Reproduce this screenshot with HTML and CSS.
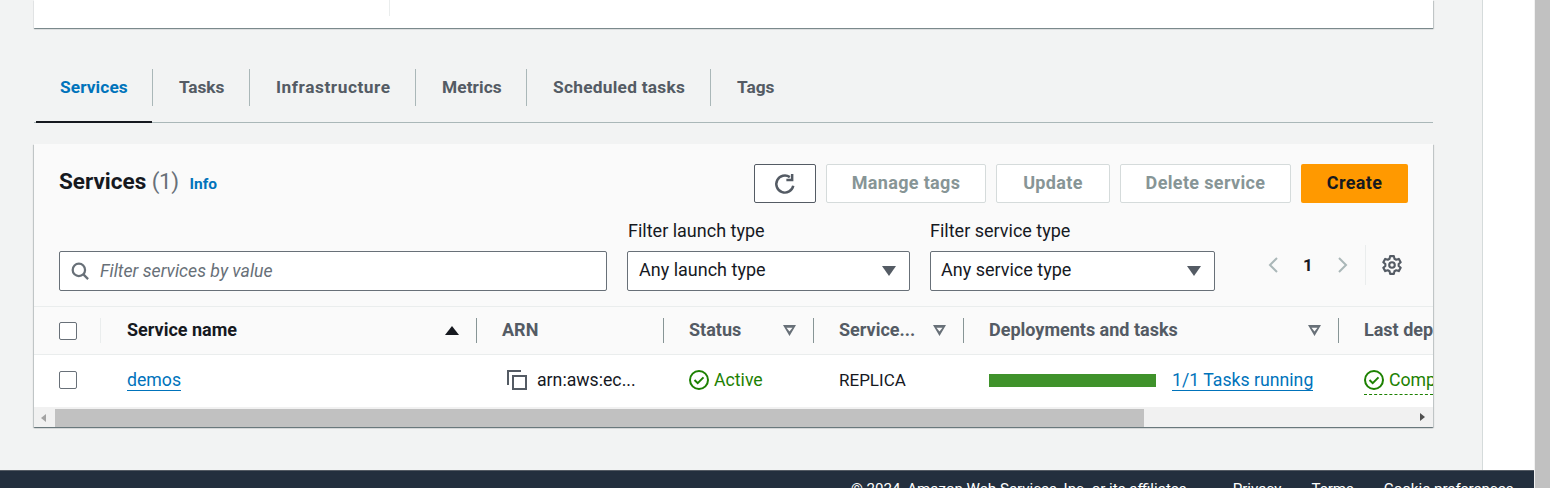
FILE: index.html
```html
<!DOCTYPE html>
<html lang="en">
<head>
<meta charset="utf-8">
<title>Services</title>
<link rel="stylesheet" href="styles.css">
</head>
<body>
<div class="page">
  <div class="viewport">
    <div class="upper">
      <main class="main">
        <div class="top-card"><div class="top-card-inner"><span class="top-divider"></span></div></div>
        <nav class="tabs">
          <a class="tab active">Services</a>
          <a class="tab t-tasks">Tasks</a>
          <a class="tab t-infra">Infrastructure</a>
          <a class="tab t-metrics">Metrics</a>
          <a class="tab t-sched">Scheduled tasks</a>
          <a class="tab t-tags">Tags</a>
        </nav>
        <section class="card">
          <header class="card-head">
            <div class="title-row">
              <h2 class="title">Services <span class="count">(1)</span></h2>
              <a class="info">Info</a>
              <div class="actions">
                <button class="btn btn-refresh" aria-label="Refresh">
                  <svg width="22" height="22" viewBox="0 0 16 16" fill="none" stroke="#545b64" stroke-width="1.800"><path d="M14 9.200A6.200 6.200 0 1 1 11.500 3"/><path d="M13.200 .8v4.300H9"/></svg>
                </button>
                <button class="btn btn-disabled btn-tags">Manage tags</button>
                <button class="btn btn-disabled btn-update">Update</button>
                <button class="btn btn-disabled btn-delete">Delete service</button>
                <button class="btn btn-primary">Create</button>
              </div>
            </div>
            <div class="filter-row">
              <div class="search">
                <svg class="search-icon" width="18" height="18" viewBox="0 0 16 16" fill="none" stroke="#687078" stroke-width="2"><circle cx="7" cy="7" r="5.500"/><path d="M11 11l4.200 4.200"/></svg>
                <span class="placeholder">Filter services by value</span>
              </div>
              <div class="field field-launch">
                <label class="field-label">Filter launch type</label>
                <div class="select"><span>Any launch type</span><i class="caret"></i></div>
              </div>
              <div class="field field-service">
                <label class="field-label">Filter service type</label>
                <div class="select"><span>Any service type</span><i class="caret"></i></div>
              </div>
              <div class="pager">
                <svg width="14" height="18" viewBox="0 0 14 18" fill="none" stroke="#aab7b8" stroke-width="2"><path d="M11 2L4 9l7 7"/></svg>
                <span class="page-num">1</span>
                <svg width="14" height="18" viewBox="0 0 14 18" fill="none" stroke="#aab7b8" stroke-width="2"><path d="M3 2l7 7-7 7"/></svg>
                <span class="pager-divider"></span>
                <svg class="gear" width="20" height="20" viewBox="1 1 18 18" fill="none" stroke="#545b64" stroke-width="1.900" stroke-linejoin="round"><path d="M8.300 2h3.400l.5 2.400 1.600.9 2.300-.8 1.700 3-1.800 1.600v1.800l1.800 1.600-1.700 3-2.300-.8-1.600.9-.5 2.400H8.300l-.5-2.400-1.600-.9-2.300.8-1.700-3 1.800-1.600V9.100L2.200 7.500l1.700-3 2.300.8 1.600-.9z"/><circle cx="10" cy="10" r="2.500"/></svg>
              </div>
            </div>
          </header>
          <div class="table-wrap">
            <div class="row row-head">
              <div class="cell c-check"><i class="checkbox"></i><span class="light-sep"></span></div>
              <div class="cell c-name strong">Service name<i class="sort-up"></i><span class="sep"></span></div>
              <div class="cell c-arn">ARN<span class="sep"></span></div>
              <div class="cell c-status">Status<i class="filter-ico"></i><span class="sep"></span></div>
              <div class="cell c-type">Service...<i class="filter-ico"></i><span class="sep"></span></div>
              <div class="cell c-deploy">Deployments and tasks<i class="filter-ico"></i><span class="sep"></span></div>
              <div class="cell c-last">Last deployment</div>
            </div>
            <div class="row row-body">
              <div class="cell c-check"><i class="checkbox"></i></div>
              <div class="cell c-name has-link"><a class="link">demos</a></div>
              <div class="cell c-arn arn">
                <svg width="22" height="22" viewBox="0 0 22 22" fill="none" stroke="#545b64" stroke-width="2"><path d="M2 16V2h13"/><rect x="7" y="7" width="13" height="13"/></svg>
                <span>arn:aws:ec...</span>
              </div>
              <div class="cell c-status ok">
                <svg width="20" height="20" viewBox="0 0 20 20" fill="none" stroke="#1d8102" stroke-width="2"><circle cx="10" cy="10" r="9"/><path d="M5.500 10l3.200 3.200 5.800-5.800"/></svg>
                <span>Active</span>
              </div>
              <div class="cell c-type plain">REPLICA</div>
              <div class="cell c-deploy has-link"><span class="bar"></span><a class="link">1/1 Tasks running</a></div>
              <div class="cell c-last ok last">
                <svg width="20" height="20" viewBox="0 0 20 20" fill="none" stroke="#1d8102" stroke-width="2"><circle cx="10" cy="10" r="9"/><path d="M5.500 10l3.200 3.200 5.800-5.800"/></svg>
                <span>Completed</span>
              </div>
            </div>
            <div class="hscroll">
              <i class="arrow-left"></i>
              <div class="hthumb"></div>
              <i class="arrow-right"></i>
            </div>
          </div>
        </section>
      </main>
      <aside class="side"></aside>
    </div>
    <footer class="footer">
      <span class="copyright">© 2024, Amazon Web Services, Inc. or its affiliates.</span>
      <a>Privacy</a><a>Terms</a><a>Cookie preferences</a>
    </footer>
  </div>
  <div class="vscroll"></div>
</div>
</body>
</html>
```
FILE: styles.css
```css
* { box-sizing: border-box; }
html, body { margin: 0; height: 100%; overflow: hidden; }
body { font-family: Roboto, "Noto Sans", sans-serif; font-size: 16px; color: #16191f; background: #fff; }
.page { display: flex; height: 488px; }
.viewport { width: 1534px; display: flex; flex-direction: column; }
.upper { display: flex; height: 470px; }
.main { width: 1483px; height: 470px; background: #f2f3f3; border-right: 1px solid #d5dbdb; padding-left: 34px; overflow: hidden; }
.side { flex: 1; background: #fff; }
.vscroll { flex: 1; background: #c1c1c1; border-left: 1px solid #f1f1f1; }
.top-card { width: 1399px; height: 28px; background: #fff; box-shadow: 0 1px 1px 0 rgba(0,28,36,.4), 1px 1px 1px 0 rgba(0,28,36,.15); padding-left: 355px; }
.top-card-inner { height: 16px; }
.top-divider { display: block; width: 1px; height: 16px; background: #eaeded; }
.tabs { width: 1399px; margin-top: 41px; height: 54px; border-bottom: 1px solid #aab7b8; display: flex; padding-left: 2px; }
.tab { height: 54px; padding: 0 0 19px 27px; display: flex; align-items: center; font-weight: 700; color: #545b64; position: relative; font-size: 17.300px; white-space: nowrap; }
.tab + .tab::before { content: ""; position: absolute; left: 0; top: 0; height: 37px; width: 1px; background: #aab7b8; }
.tab.active { color: #0073bb; padding: 0 0 17px 24px; width: 116px; border-bottom: 2px solid #16191f; letter-spacing: .1px; }
.t-tasks { width: 97px; letter-spacing: -.1px; }
.t-infra { width: 166px; letter-spacing: .55px; }
.t-metrics { width: 111px; letter-spacing: .1px; }
.t-sched { width: 184px; letter-spacing: .27px; }
.t-tags { width: 80px; }
.card { width: 1399px; height: 283px; margin-top: 21px; background: #fff; box-shadow: 0 1px 1px 0 rgba(0,28,36,.4), 1px 1px 1px 0 rgba(0,28,36,.15), -1px 1px 1px 0 rgba(0,28,36,.15); display: flex; flex-direction: column; overflow: hidden; }
.card-head { background: #fafafa; height: 163px; border-bottom: 1px solid #eaeded; padding: 20px 25px 0; }
.title-row { display: flex; align-items: flex-start; height: 39px; }
.title { margin: 2px 0 0; font-size: 22.500px; line-height: 30px; font-weight: 700; }
.count { font-weight: 400; color: #687078; letter-spacing: -.5px; }
.info { margin: 9px 0 0 11px; font-size: 15.500px; font-weight: 700; color: #0073bb; line-height: 22px; }
.actions { margin-left: auto; display: flex; gap: 10px; }
.btn { font: 700 18px Roboto, sans-serif; letter-spacing: .35px; height: 39px; border-radius: 2px; background: #fff; padding: 0 0 2px; }
.btn-refresh { width: 62px; border: 1px solid #545b64; display: flex; align-items: center; justify-content: center; padding: 0; }
.btn-disabled { border: 1px solid #d5dbdb; color: #879596; }
.btn-tags { width: 160px; }
.btn-update { width: 114px; }
.btn-delete { width: 171px; }
.btn-primary { width: 107px; border: 0; background: #ff9900; color: #16191f; }
.filter-row { display: flex; align-items: flex-end; height: 88px; }
.search { width: 548px; height: 40px; background: #fff; border: 1px solid #687078; border-radius: 2px; display: flex; align-items: center; padding-left: 11px; gap: 11px; }
.placeholder { font-style: italic; font-size: 17.700px; color: #687078; }
.field { display: flex; flex-direction: column; gap: 8px; margin-left: 20px; }
.field-label { font-size: 18px; line-height: 24px; }
.field-launch .field-label { padding-left: 1px; }
.select { height: 40px; background: #fff; border: 1px solid #687078; border-radius: 2px; display: flex; align-items: center; justify-content: space-between; padding: 0 13px 3px 10px; font-size: 18px; }
.field-launch .select { width: 283px; padding-left: 11px; }
.field-service .select { width: 285px; }
.caret { width: 0; height: 0; border: 7px solid transparent; border-top: 10px solid #545b64; border-bottom: 0; margin-top: 3px; }
.pager { display: flex; align-items: center; margin-left: 51px; height: 40px; margin-bottom: 6px; }
.page-num { font-weight: 700; width: 56px; text-align: center; font-size: 17px; }
.pager-divider { width: 1px; height: 40px; background: #eaeded; margin: 0 16px 0 15px; }
.table-wrap { flex: 1; display: flex; flex-direction: column; }
.row { display: flex; align-items: center; }
.row-head { height: 48px; background: #fafafa; border-bottom: 1px solid #eaeded; font-weight: 700; color: #545b64; font-size: 18px; }
.row-body { height: 52px; background: #fff; font-size: 17.700px; }
.cell { position: relative; display: flex; align-items: center; height: 100%; padding: 0 0 2px 25px; flex: none; white-space: nowrap; }
.row-head .c-check { padding-bottom: 0; }
.strong { color: #16191f; }
.c-check { width: 67px; }
.c-name { width: 376px; padding-left: 26px; }
.c-arn { width: 187px; }
.c-status { width: 150px; }
.c-type { width: 150px; }
.c-deploy { width: 375px; }
.c-last { width: 94px; overflow: hidden; }
.sep { position: absolute; right: 0; top: 11px; height: 25px; width: 1px; background: #879596; }
.light-sep { position: absolute; right: 0; top: 11px; height: 25px; width: 1px; background: #eaeded; }
.checkbox { width: 18px; height: 18px; border: 1px solid #687078; border-radius: 2px; background: #fff; display: block; }
.sort-up { position: absolute; right: 18px; top: 19px; width: 0; height: 0; border: 7px solid transparent; border-bottom: 9px solid #16191f; border-top: 0; }
.filter-ico { position: absolute; right: 18px; top: 18px; width: 13px; height: 11px; background: #687078; clip-path: polygon(0 0, 100% 0, 50% 100%, 0 0, 27% 26%, 50% 60%, 73% 26%, 27% 26%, 0 0); }
.has-link { padding-bottom: 0; }
.link { color: #0073bb; border-bottom: 1px solid #0073bb; line-height: 19px; }
.plain { font-size: 17px; }
.arn { padding-left: 29px; gap: 9px; }
.ok { color: #1d8102; gap: 5px; }
.ok svg { flex: none; }
.bar { width: 167px; height: 13px; background: #3f922b; margin: 0 16px 2px 0; }
.last::after { content: ""; position: absolute; left: 25px; right: 0; bottom: 12px; border-bottom: 1px dashed #1d8102; }
.hscroll { flex: 1; background: #f1f1f1; display: flex; align-items: center; position: relative; padding-top: 1px; }
.hthumb { width: 1089px; height: 18px; margin-left: 21px; background: #c1c1c1; }
.arrow-left { position: absolute; left: 7px; top: 7px; border: 4px solid transparent; border-right: 5px solid #a3a3a3; border-left: 0; }
.arrow-right { position: absolute; right: 8px; top: 6px; border: 4.500px solid transparent; border-left: 5px solid #505050; border-right: 0; }
.footer { height: 18px; background: #232f3e; border-top: 1px solid #545b64; color: #fff; font-size: 15.100px; display: flex; padding-left: 851px; gap: 30px; line-height: 37px; white-space: nowrap; overflow: hidden; }
.copyright { margin-right: 12px; }
```
